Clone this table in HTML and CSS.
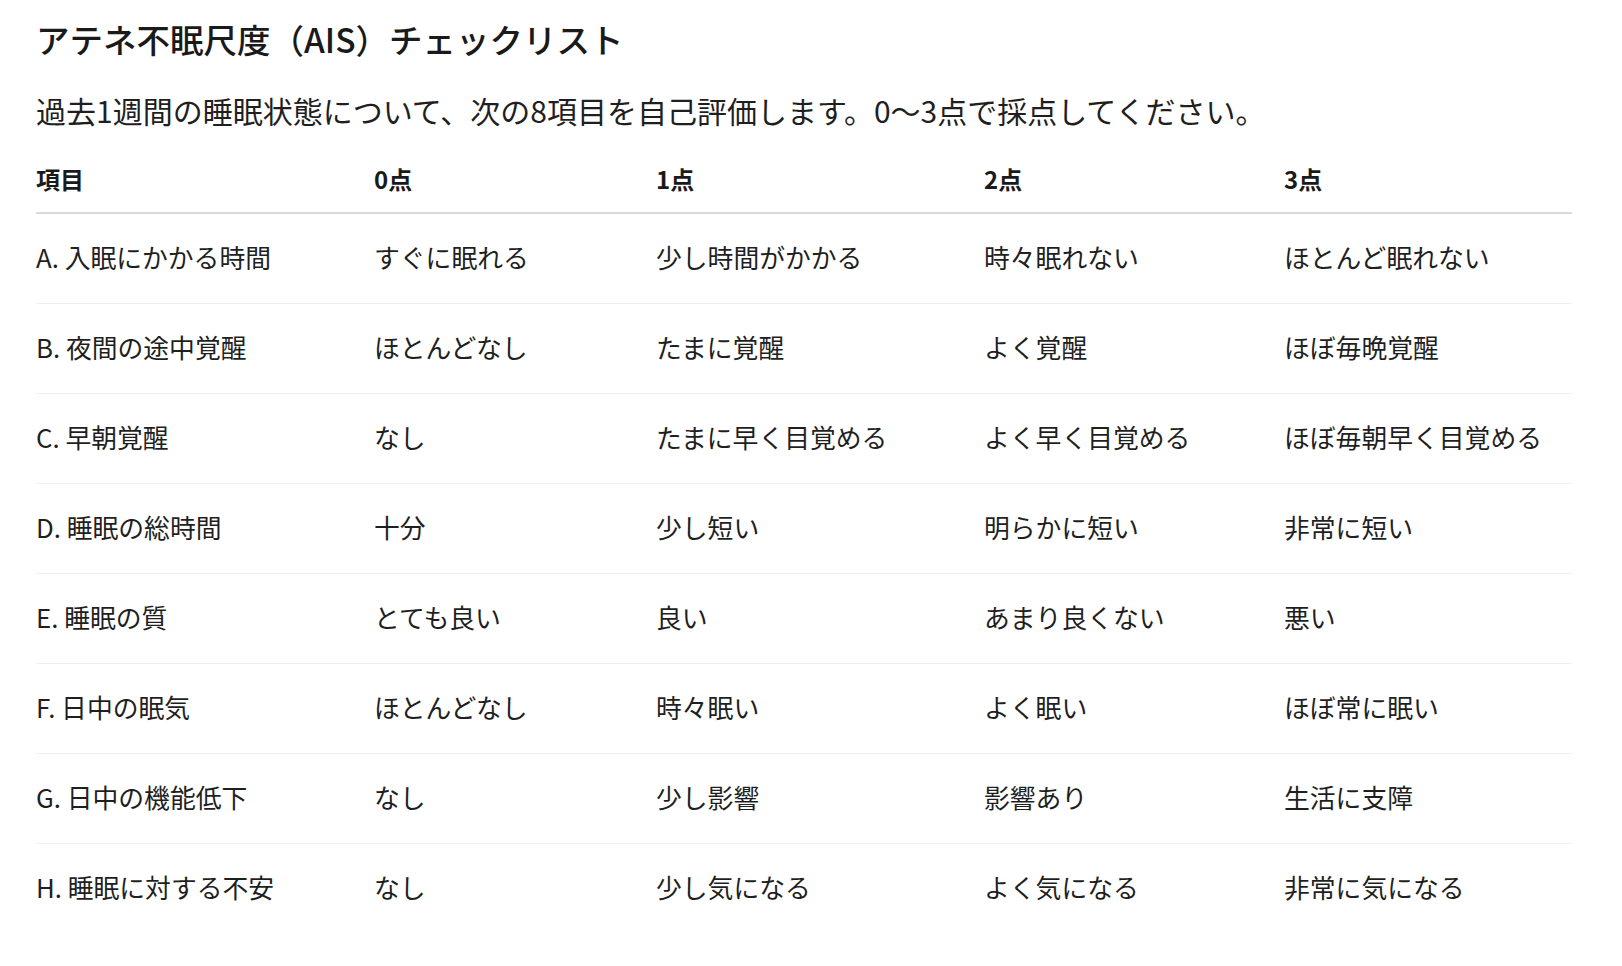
FILE: index.html
```html
<!DOCTYPE html>
<html lang="ja">
<head>
<meta charset="utf-8">
<title>アテネ不眠尺度（AIS）チェックリスト</title>
<link rel="stylesheet" href="styles.css">
</head>
<body>
<main class="page">
  <h1 class="title">アテネ不眠尺度（AIS）チェックリスト</h1>
  <p class="lead">過去1週間の睡眠状態について、次の8項目を自己評価します。0〜3点で採点してください。</p>
  <table class="ais">
    <colgroup>
      <col class="c-item">
      <col class="c-0">
      <col class="c-1">
      <col class="c-2">
      <col class="c-3">
    </colgroup>
    <thead>
      <tr><th>項目</th><th>0点</th><th>1点</th><th>2点</th><th>3点</th></tr>
    </thead>
    <tbody>
      <tr><td>A. 入眠にかかる時間</td><td>すぐに眠れる</td><td>少し時間がかかる</td><td>時々眠れない</td><td>ほとんど眠れない</td></tr>
      <tr><td>B. 夜間の途中覚醒</td><td>ほとんどなし</td><td>たまに覚醒</td><td>よく覚醒</td><td>ほぼ毎晩覚醒</td></tr>
      <tr><td>C. 早朝覚醒</td><td>なし</td><td>たまに早く目覚める</td><td>よく早く目覚める</td><td>ほぼ毎朝早く目覚める</td></tr>
      <tr><td>D. 睡眠の総時間</td><td>十分</td><td>少し短い</td><td>明らかに短い</td><td>非常に短い</td></tr>
      <tr><td>E. 睡眠の質</td><td>とても良い</td><td>良い</td><td>あまり良くない</td><td>悪い</td></tr>
      <tr><td>F. 日中の眠気</td><td>ほとんどなし</td><td>時々眠い</td><td>よく眠い</td><td>ほぼ常に眠い</td></tr>
      <tr><td>G. 日中の機能低下</td><td>なし</td><td>少し影響</td><td>影響あり</td><td>生活に支障</td></tr>
      <tr><td>H. 睡眠に対する不安</td><td>なし</td><td>少し気になる</td><td>よく気になる</td><td>非常に気になる</td></tr>
    </tbody>
  </table>
</main>
</body>
</html>
```
FILE: styles.css
```css
html, body {
  margin: 0;
  padding: 0;
  background: #ffffff;
}
body {
  font-family: "Noto Sans CJK JP", "Noto Sans", sans-serif;
  color: #1f1f1f;
}
.page {
  padding: 16px 0 0 36px;
}
.title {
  margin: 0;
  font-size: 33.5px;
  line-height: 46px;
  font-weight: 500;
  color: #1a1a1a;
}
.lead {
  margin: 28px 0 0;
  font-size: 30px;
  line-height: 40px;
  font-weight: 400;
  color: #1f1f1f;
}
.ais {
  margin-top: 17px;
  width: 1536px;
  table-layout: fixed;
  border-collapse: collapse;
}
.c-item { width: 338px; }
.c-0 { width: 282px; }
.c-1 { width: 328px; }
.c-2 { width: 300px; }
.c-3 { width: 288px; }
.ais th {
  text-align: left;
  font-size: 24px;
  line-height: 36px;
  font-weight: 700;
  padding: 14px 0 15px;
  border-bottom: 2px solid #dadada;
  color: #1a1a1a;
}
.ais td {
  font-size: 25.8px;
  line-height: 37px;
  font-weight: 400;
  padding: 24px 0 28px;
  border-bottom: 1px solid #efefef;
  white-space: nowrap;
}
.ais tbody tr:last-child td {
  border-bottom: none;
}
```
